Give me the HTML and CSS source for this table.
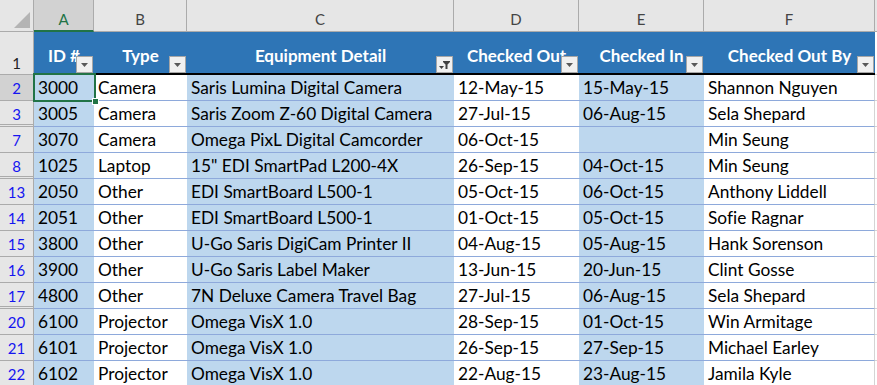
FILE: index.html
```html
<!DOCTYPE html>
<html>
<head>
<meta charset="utf-8">
<link rel="stylesheet" href="styles.css">
</head>
<body>
<div class="sheet">
  <div class="colhdr corner"></div>
  <div class="colhdr sel">A</div>
  <div class="colhdr">B</div>
  <div class="colhdr">C</div>
  <div class="colhdr">D</div>
  <div class="colhdr">E</div>
  <div class="colhdr">F</div>
  <div class="colhdr"></div>

  <div class="rowhdr first">1</div>
  <div class="th">ID #<span class="fbtn"><svg width="7" height="4" viewBox="0 0 7 4"><polygon points="0,0 7,0 3.5,4" fill="#595959"/></svg></span></div>
  <div class="th">Type<span class="fbtn"><svg width="7" height="4" viewBox="0 0 7 4"><polygon points="0,0 7,0 3.5,4" fill="#595959"/></svg></span></div>
  <div class="th">Equipment Detail<span class="fbtn"><svg width="12" height="10" viewBox="0 0 12 10"><polygon points="0,6 5,6 2.5,9" fill="#404040"/><polygon points="4,1 11,1 11,2 8.5,4.5 8.5,9 6.5,9 6.5,4.5 4,2" fill="#404040"/></svg></span></div>
  <div class="th">Checked Out<span class="fbtn"><svg width="7" height="4" viewBox="0 0 7 4"><polygon points="0,0 7,0 3.5,4" fill="#595959"/></svg></span></div>
  <div class="th">Checked In<span class="fbtn"><svg width="7" height="4" viewBox="0 0 7 4"><polygon points="0,0 7,0 3.5,4" fill="#595959"/></svg></span></div>
  <div class="th">Checked Out By<span class="fbtn"><svg width="7" height="4" viewBox="0 0 7 4"><polygon points="0,0 7,0 3.5,4" fill="#595959"/></svg></span></div>
  <div class="blank"></div>

  <div class="rowhdr sel">2</div>
  <div class="cell band active">3000<span class="handle"></span></div>
  <div class="cell">Camera</div>
  <div class="cell band">Saris Lumina Digital Camera</div>
  <div class="cell">12-May-15</div>
  <div class="cell band">15-May-15</div>
  <div class="cell edge">Shannon Nguyen</div>
  <div class="blank"></div>

  <div class="rowhdr hid">3</div>
  <div class="cell band">3005</div>
  <div class="cell">Camera</div>
  <div class="cell band">Saris Zoom Z-60 Digital Camera</div>
  <div class="cell">27-Jul-15</div>
  <div class="cell band">06-Aug-15</div>
  <div class="cell edge">Sela Shepard</div>
  <div class="blank"></div>

  <div class="rowhdr">7</div>
  <div class="cell band">3070</div>
  <div class="cell">Camera</div>
  <div class="cell band">Omega PixL Digital Camcorder</div>
  <div class="cell">06-Oct-15</div>
  <div class="cell band"></div>
  <div class="cell edge">Min Seung</div>
  <div class="blank"></div>

  <div class="rowhdr hid">8</div>
  <div class="cell band">1025</div>
  <div class="cell">Laptop</div>
  <div class="cell band">15" EDI SmartPad L200-4X</div>
  <div class="cell">26-Sep-15</div>
  <div class="cell band">04-Oct-15</div>
  <div class="cell edge">Min Seung</div>
  <div class="blank"></div>

  <div class="rowhdr">13</div>
  <div class="cell band">2050</div>
  <div class="cell">Other</div>
  <div class="cell band">EDI SmartBoard L500-1</div>
  <div class="cell">05-Oct-15</div>
  <div class="cell band">06-Oct-15</div>
  <div class="cell edge">Anthony Liddell</div>
  <div class="blank"></div>

  <div class="rowhdr">14</div>
  <div class="cell band">2051</div>
  <div class="cell">Other</div>
  <div class="cell band">EDI SmartBoard L500-1</div>
  <div class="cell">01-Oct-15</div>
  <div class="cell band">05-Oct-15</div>
  <div class="cell edge">Sofie Ragnar</div>
  <div class="blank"></div>

  <div class="rowhdr">15</div>
  <div class="cell band">3800</div>
  <div class="cell">Other</div>
  <div class="cell band">U-Go Saris DigiCam Printer II</div>
  <div class="cell">04-Aug-15</div>
  <div class="cell band">05-Aug-15</div>
  <div class="cell edge">Hank Sorenson</div>
  <div class="blank"></div>

  <div class="rowhdr">16</div>
  <div class="cell band">3900</div>
  <div class="cell">Other</div>
  <div class="cell band">U-Go Saris Label Maker</div>
  <div class="cell">13-Jun-15</div>
  <div class="cell band">20-Jun-15</div>
  <div class="cell edge">Clint Gosse</div>
  <div class="blank"></div>

  <div class="rowhdr hid">17</div>
  <div class="cell band">4800</div>
  <div class="cell">Other</div>
  <div class="cell band">7N Deluxe Camera Travel Bag</div>
  <div class="cell">27-Jul-15</div>
  <div class="cell band">06-Aug-15</div>
  <div class="cell edge">Sela Shepard</div>
  <div class="blank"></div>

  <div class="rowhdr">20</div>
  <div class="cell band">6100</div>
  <div class="cell">Projector</div>
  <div class="cell band">Omega VisX 1.0</div>
  <div class="cell">28-Sep-15</div>
  <div class="cell band">01-Oct-15</div>
  <div class="cell edge">Win Armitage</div>
  <div class="blank"></div>

  <div class="rowhdr">21</div>
  <div class="cell band">6101</div>
  <div class="cell">Projector</div>
  <div class="cell band">Omega VisX 1.0</div>
  <div class="cell">26-Sep-15</div>
  <div class="cell band">27-Sep-15</div>
  <div class="cell edge">Michael Earley</div>
  <div class="blank"></div>

  <div class="rowhdr">22</div>
  <div class="cell band">6102</div>
  <div class="cell">Projector</div>
  <div class="cell band">Omega VisX 1.0</div>
  <div class="cell">22-Aug-15</div>
  <div class="cell band">23-Aug-15</div>
  <div class="cell edge">Jamila Kyle</div>
  <div class="blank"></div>
</div>
</body>
</html>
```

FILE: styles.css
```css
* { box-sizing: border-box; }
html, body { margin: 0; padding: 0; background: #fff; overflow: hidden; }
body {
  font-family: Lato, "Open Sans", sans-serif;
  font-variant-ligatures: none;
}

.sheet {
  display: grid;
  grid-template-columns: 34px 60px 93px 267px 125px 125px 171px 40px;
  grid-template-rows: 32px 43px repeat(12, 26px);
  width: 915px;
}

.colhdr {
  background: #E6E6E6;
  border-right: 1px solid #ABABAB;
  border-bottom: 1px solid #ABABAB;
  color: #444;
  font-size: 15px;
  line-height: 18px;
  display: flex;
  align-items: flex-end;
  justify-content: center;
  padding-bottom: 3px;
}
.colhdr.sel {
  background: #D2D2D2;
  color: #217346;
  border-bottom: 2px solid #217346;
  padding-bottom: 2px;
}
.corner { position: relative; }
.corner::after {
  content: "";
  position: absolute;
  right: 3px;
  bottom: 3px;
  width: 0;
  height: 0;
  border-left: 16px solid transparent;
  border-bottom: 16px solid #B4B4B4;
}

.rowhdr {
  background: #E6E6E6;
  border-right: 1px solid #ABABAB;
  border-bottom: 1px solid #ABABAB;
  color: #1515F0;
  font-size: 15px;
  line-height: 18px;
  display: flex;
  justify-content: center;
  align-items: flex-end;
  padding-bottom: 3px;
}
.rowhdr.first { color: #222; padding-bottom: 2px; }
.rowhdr.hid { border-bottom: 3px double #ABABAB; padding-bottom: 1px; }
.rowhdr.sel { background: #D2D2D2; }

.th {
  background: #2E75B6;
  color: #fff;
  font-weight: bold;
  font-size: 17px;
  line-height: 20px;
  border-bottom: 2px solid #000;
  display: flex;
  align-items: flex-end;
  justify-content: center;
  position: relative;
  padding-bottom: 7px;
  white-space: nowrap;
}
.fbtn {
  position: absolute;
  right: 1px;
  bottom: 0;
  width: 17px;
  height: 17px;
  background: #F0F0F0;
  border: 1px solid #A6A6A6;
  display: flex;
  align-items: center;
  justify-content: center;
}

.cell {
  font-size: 17.3px;
  line-height: 20px;
  color: #000;
  padding: 0 0 2px 4px;
  display: flex;
  align-items: flex-end;
  border-bottom: 1px solid #8EA9DB;
  white-space: nowrap;
  overflow: hidden;
}
.band { background: #BDD7EE; }
.edge { border-right: 1px solid #D4D4D4; }
.blank { border-bottom: 1px solid #D4D4D4; }

.active { position: relative; overflow: visible; z-index: 2; }
.active::before {
  content: "";
  position: absolute;
  left: -1px;
  top: -2px;
  right: -2px;
  bottom: -2px;
  border: 2px solid #217346;
}
.handle {
  position: absolute;
  right: -5px;
  bottom: -5px;
  width: 7px;
  height: 7px;
  background: #217346;
  border: 1px solid #fff;
}
```
